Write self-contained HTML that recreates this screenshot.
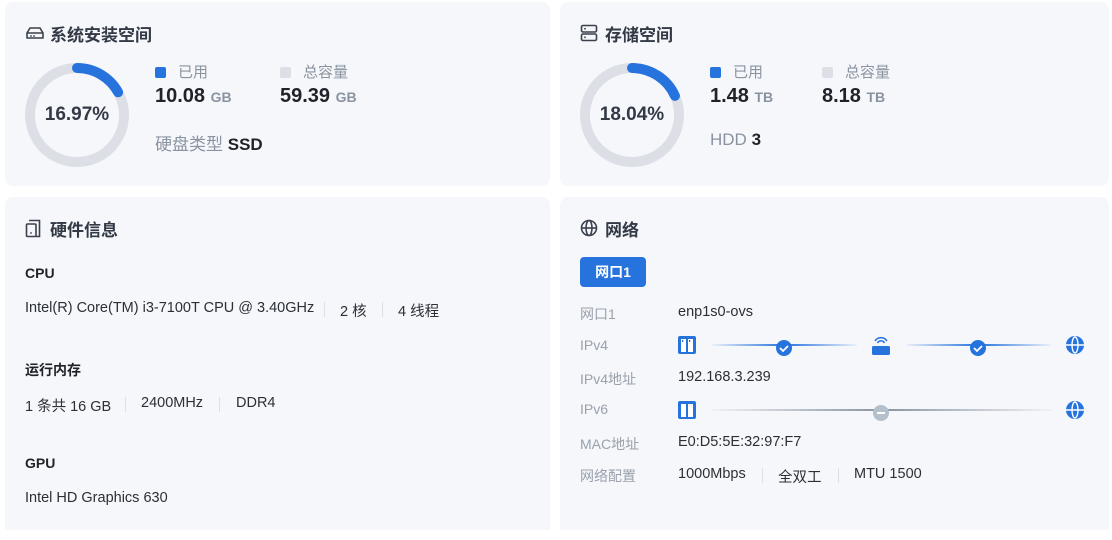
<!DOCTYPE html>
<html><head><meta charset="utf-8"><style>
*{margin:0;padding:0;box-sizing:border-box}
body{width:1112px;height:540px;background:#fff;position:relative;overflow:hidden;font-family:"Liberation Sans","Noto Sans CJK SC",sans-serif;color:#1f2329}
.card{position:absolute;background:#f5f7fb;border-radius:8px}
.a{position:absolute;white-space:nowrap}
.t{font-size:17px;font-weight:bold;color:#333a45}
.lbl{font-size:15px;color:#8a93a0}
.big{font-size:20px;font-weight:bold;color:#1f2329}
.u{font-size:14px;color:#8a93a0;font-weight:bold}
.sq{display:inline-block;width:11px;height:11px;border-radius:2px;vertical-align:-1px;margin-right:12px}
.s14{font-size:14.5px;color:#2b2f36}
.bd{font-size:14px;font-weight:bold;color:#1f2329}
.sep{position:absolute;width:1px;height:15px;background:#dde1e6}
.g{font-size:14px;color:#9aa1ab}
</style></head><body>
<div class="card" style="left:5px;top:2px;width:545px;height:184px"></div>
<div class="card" style="left:560px;top:2px;width:549px;height:184px"></div>
<div class="card" style="left:5px;top:197px;width:545px;height:333px;border-radius:8px 8px 0 0"></div>
<div class="card" style="left:560px;top:197px;width:549px;height:333px;border-radius:8px 8px 0 0"></div>

<!-- card1 -->
<svg class="a" style="left:25px;top:25px" width="20" height="16" viewBox="0 0 20 16"><path d="M2 8 L5 3 H15 L18 8 V13 H2 Z M2 8 H18" fill="none" stroke="#3a414c" stroke-width="1.6" stroke-linejoin="round"/><circle cx="6" cy="11" r=".9" fill="#3a414c"/><circle cx="9" cy="11" r=".9" fill="#3a414c"/></svg>
<div class="a t" style="left:50px;top:21px">系统安装空间</div>
<svg class="a" style="left:25px;top:63px" width="104" height="104"><circle cx="52" cy="52" r="47" fill="none" stroke="#dcdfe5" stroke-width="10"/><circle cx="52" cy="52" r="47" fill="none" stroke="#2673dd" stroke-width="10" stroke-linecap="round" stroke-dasharray="50 300" transform="rotate(-90 52 52)"/></svg>
<div class="a" style="left:25px;top:104px;width:104px;text-align:center;font-size:19px;font-weight:bold;color:#333a45">16.97%</div>
<div class="a lbl" style="left:155px;top:61px"><span class="sq" style="background:#2673dd"></span>已用</div>
<div class="a lbl" style="left:280px;top:61px"><span class="sq" style="background:#dcdfe5"></span>总容量</div>
<div class="a big" style="left:155px;top:85px">10.08 <span class="u">GB</span></div>
<div class="a big" style="left:280px;top:85px">59.39 <span class="u">GB</span></div>
<div class="a" style="left:155px;top:130px;font-size:17px;color:#8a93a0">硬盘类型 <span style="color:#1f2329;font-weight:bold">SSD</span></div>

<!-- card2 -->
<svg class="a" style="left:580px;top:24px" width="18" height="18" viewBox="0 0 18 18"><rect x="1.5" y="1.5" width="15" height="6.5" rx="1.5" fill="none" stroke="#3a414c" stroke-width="1.6"/><rect x="1.5" y="10" width="15" height="6.5" rx="1.5" fill="none" stroke="#3a414c" stroke-width="1.6"/><circle cx="5" cy="4.8" r=".9" fill="#3a414c"/><circle cx="5" cy="13.3" r=".9" fill="#3a414c"/></svg>
<div class="a t" style="left:605px;top:21px">存储空间</div>
<svg class="a" style="left:580px;top:63px" width="104" height="104"><circle cx="52" cy="52" r="47" fill="none" stroke="#dcdfe5" stroke-width="10"/><circle cx="52" cy="52" r="47" fill="none" stroke="#2673dd" stroke-width="10" stroke-linecap="round" stroke-dasharray="54 300" transform="rotate(-90 52 52)"/></svg>
<div class="a" style="left:580px;top:104px;width:104px;text-align:center;font-size:19px;font-weight:bold;color:#333a45">18.04%</div>
<div class="a lbl" style="left:710px;top:61px"><span class="sq" style="background:#2673dd"></span>已用</div>
<div class="a lbl" style="left:822px;top:61px"><span class="sq" style="background:#dcdfe5"></span>总容量</div>
<div class="a big" style="left:710px;top:85px">1.48 <span class="u">TB</span></div>
<div class="a big" style="left:822px;top:85px">8.18 <span class="u">TB</span></div>
<div class="a" style="left:710px;top:130px;font-size:17px;color:#8a93a0">HDD <span style="color:#1f2329;font-weight:bold">3</span></div>

<!-- card3 -->
<svg class="a" style="left:25px;top:219px" width="16" height="19" viewBox="0 0 16 19"><path d="M4 1.5 H14.5 V17.5 H11" fill="none" stroke="#3a414c" stroke-width="1.6"/><rect x="1.5" y="5" width="9.5" height="12.5" rx="1" fill="none" stroke="#3a414c" stroke-width="1.6"/><circle cx="6" cy="14" r=".9" fill="#3a414c"/></svg>
<div class="a t" style="left:50px;top:216px">硬件信息</div>
<div class="a bd" style="left:25px;top:265px">CPU</div>
<div class="a s14" style="left:25px;top:300px">Intel(R) Core(TM) i3-7100T CPU @ 3.40GHz</div>
<div class="sep" style="left:324px;top:302px"></div>
<div class="a s14" style="left:340px;top:300px">2 核</div>
<div class="sep" style="left:382px;top:302px"></div>
<div class="a s14" style="left:398px;top:300px">4 线程</div>
<div class="a bd" style="left:25px;top:360px">运行内存</div>
<div class="a s14" style="left:25px;top:395px">1 条共 16 GB</div>
<div class="sep" style="left:125px;top:397px"></div>
<div class="a s14" style="left:141px;top:395px">2400MHz</div>
<div class="sep" style="left:219px;top:397px"></div>
<div class="a s14" style="left:236px;top:395px">DDR4</div>
<div class="a bd" style="left:25px;top:455px">GPU</div>
<div class="a s14" style="left:25px;top:490px">Intel HD Graphics 630</div>

<!-- card4 -->
<svg class="a" style="left:580px;top:219px" width="18" height="18" viewBox="0 0 18 18" fill="none" stroke="#3a414c" stroke-width="1.6"><circle cx="9" cy="9" r="7.5"/><ellipse cx="9" cy="9" rx="3" ry="7.5"/><path d="M1.5 9 H16.5"/></svg>
<div class="a t" style="left:605px;top:216px">网络</div>
<div class="a" style="left:580px;top:257px;width:66px;height:30px;background:#2673dd;border-radius:4px;color:#fff;font-size:14px;font-weight:bold;text-align:center;line-height:30px">网口1</div>
<div class="a g" style="left:580px;top:304px">网口1</div><div class="a s14" style="left:678px;top:304px">enp1s0-ovs</div>
<div class="a g" style="left:580px;top:337px">IPv4</div>
<div class="a g" style="left:580px;top:369px">IPv4地址</div><div class="a s14" style="left:678px;top:369px">192.168.3.239</div>
<div class="a g" style="left:580px;top:401px">IPv6</div>
<div class="a g" style="left:580px;top:434px">MAC地址</div><div class="a s14" style="left:678px;top:434px">E0:D5:5E:32:97:F7</div>
<div class="a g" style="left:580px;top:466px">网络配置</div>
<div class="a s14" style="left:678px;top:466px">1000Mbps</div>
<div class="sep" style="left:762px;top:468px"></div>
<div class="a s14" style="left:778px;top:466px">全双工</div>
<div class="sep" style="left:838px;top:468px"></div>
<div class="a s14" style="left:854px;top:466px">MTU 1500</div>

<svg class="a" style="left:670px;top:330px" width="430" height="95">
<defs>
<linearGradient id="gb" x1="0" x2="1"><stop offset="0" stop-color="#2673dd" stop-opacity=".05"/><stop offset=".5" stop-color="#2673dd"/><stop offset="1" stop-color="#2673dd" stop-opacity=".05"/></linearGradient>
<linearGradient id="gg" x1="0" x2="1"><stop offset="0" stop-color="#8a93a0" stop-opacity=".05"/><stop offset=".5" stop-color="#8a93a0"/><stop offset="1" stop-color="#8a93a0" stop-opacity=".05"/></linearGradient>
</defs>
<g><rect x="8" y="6" width="18" height="18" rx="2" fill="#2673dd"/><rect x="11" y="9" width="5" height="13" fill="#fff"/><rect x="18" y="9" width="5" height="13" fill="#fff"/><rect x="12" y="10" width="1.2" height="2" fill="#2673dd"/><rect x="19" y="10" width="1.2" height="2" fill="#2673dd"/></g>
<rect x="42" y="14" width="145" height="2" fill="url(#gb)"/>
<circle cx="114" cy="18" r="8" fill="#2673dd"/><path d="M110 18 l3 3 l5 -5" stroke="#fff" stroke-width="1.8" fill="none"/>
<g fill="#2673dd"><rect x="202" y="16" width="18" height="9" rx="1.5"/><path d="M205 11 a7 7 0 0 1 12 0" stroke="#2673dd" stroke-width="1.5" fill="none"/><path d="M207.5 13 a4 4 0 0 1 7 0" stroke="#2673dd" stroke-width="1.5" fill="none"/></g>
<rect x="236" y="14" width="145" height="2" fill="url(#gb)"/>
<circle cx="308" cy="18" r="8" fill="#2673dd"/><path d="M304 18 l3 3 l5 -5" stroke="#fff" stroke-width="1.8" fill="none"/>
<g><circle cx="405" cy="15" r="9" fill="#2673dd"/><ellipse cx="405" cy="15" rx="3" ry="8" fill="none" stroke="#fff" stroke-width="1.4"/><path d="M396 15 H414" stroke="#fff" stroke-width="1.4"/></g>
<g><rect x="8" y="71" width="18" height="18" rx="2" fill="#2673dd"/><rect x="11" y="74" width="5" height="13" fill="#fff"/><rect x="18" y="74" width="5" height="13" fill="#fff"/></g>
<rect x="42" y="79" width="340" height="2" fill="url(#gg)"/>
<circle cx="211" cy="83" r="8" fill="#b4bfcc"/><path d="M207 83 H215" stroke="#fff" stroke-width="2"/>
<g><circle cx="405" cy="80" r="9" fill="#2673dd"/><ellipse cx="405" cy="80" rx="3" ry="8" fill="none" stroke="#fff" stroke-width="1.4"/><path d="M396 80 H414" stroke="#fff" stroke-width="1.4"/></g>
</svg>
</body></html>
